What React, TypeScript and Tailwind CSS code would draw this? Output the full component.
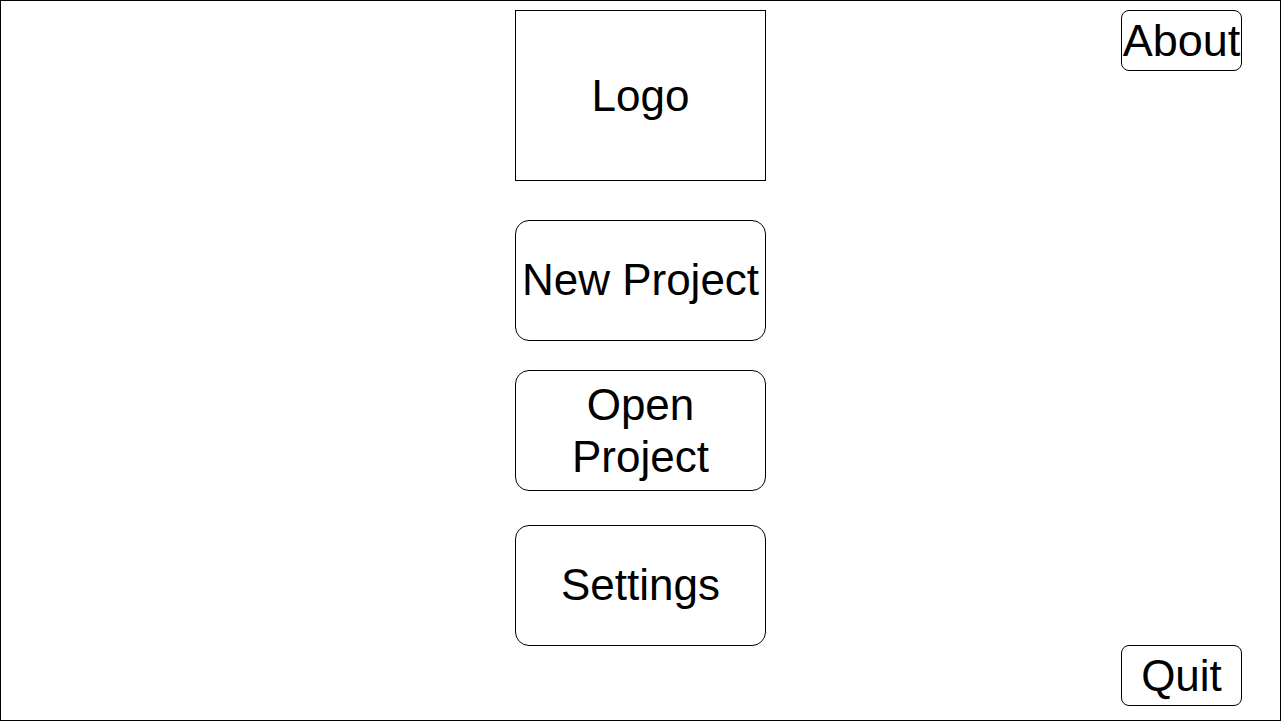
const font = "font-['Liberation_Sans',Arial,sans-serif]";

function MenuButton({ label, className = "" }: { label: string; className?: string }) {
  return (
    <div
      className={`flex h-[121px] w-[251px] items-center justify-center rounded-[14px] border border-black text-center text-[44px] leading-[1.2] ${className}`}
    >
      {label}
    </div>
  );
}

export default function App() {
  return (
    <div className={`flex h-[721px] w-[1281px] border border-black bg-white text-black ${font}`}>
      <div className="ml-[514px] flex flex-col pt-[9px]">
        <div className="flex h-[171px] w-[251px] items-center justify-center border border-black text-[44px]">
          Logo
        </div>
        <MenuButton label="New Project" className="mt-[39px]" />
        <MenuButton label={"Open\nProject"} className="mt-[29px] whitespace-pre-line leading-[52px]" />
        <MenuButton label="Settings" className="mt-[34px]" />
      </div>
      <div className="ml-[355px] flex flex-col justify-between pt-[9px] pb-[14px]">
        <div className="flex h-[61px] w-[121px] items-center justify-center rounded-[8px] border border-black text-[45px] leading-none">
          About
        </div>
        <div className="flex h-[61px] w-[121px] items-center justify-center rounded-[8px] border border-black text-[44px] leading-none">
          Quit
        </div>
      </div>
    </div>
  );
}
